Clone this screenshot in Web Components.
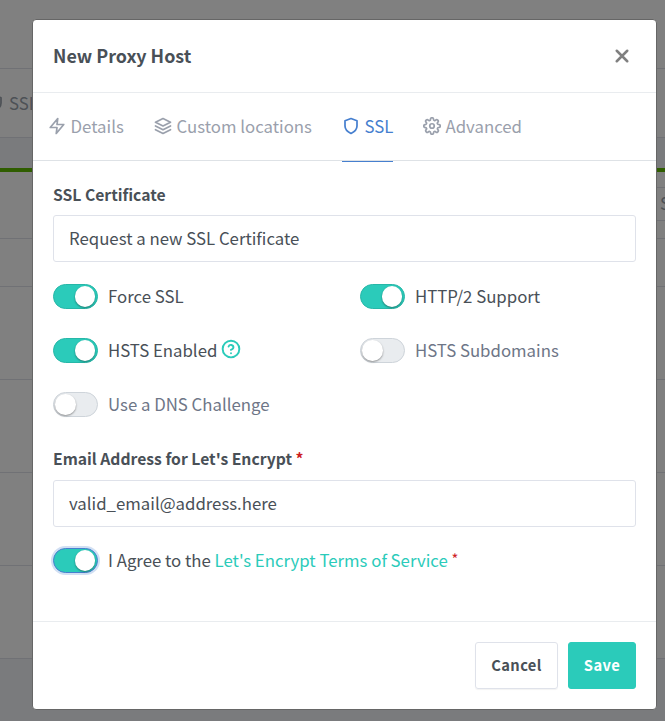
<!DOCTYPE html>
<html lang="en">
<head>
<meta charset="utf-8">
<title>New Proxy Host</title>
<style>
html,body{margin:0;height:100%;overflow:hidden}
body{background:#7a7b7d;font-family:"Noto Sans CJK SC","Noto Sans",sans-serif;font-size:16.8px;line-height:24px;color:#495057}
</style>
</head>
<body>
<proxy-page></proxy-page>
<modal-dialog>
  <modal-header slot="header">New Proxy Host</modal-header>
  <tab-bar slot="tabs">
    <tab-item icon="zap" style="width:76px;margin-right:30px">Details</tab-item>
    <tab-item icon="layers" style="width:158px;margin-right:30px">Custom locations</tab-item>
    <tab-item icon="shield" active style="width:51px;margin-right:30px">SSL</tab-item>
    <tab-item icon="settings" style="width:100px">Advanced</tab-item>
  </tab-bar>
  <form-field label="SSL Certificate">Request a new SSL Certificate</form-field>
  <switch-grid>
    <toggle-switch on>Force SSL</toggle-switch>
    <toggle-switch on>HTTP/2 Support</toggle-switch>
    <toggle-switch on>HSTS Enabled <ui-icon name="help"></ui-icon></toggle-switch>
    <toggle-switch>HSTS Subdomains</toggle-switch>
    <toggle-switch>Use a DNS Challenge</toggle-switch>
  </switch-grid>
  <form-field label="Email Address for Let's Encrypt" required>valid_email@address.here</form-field>
  <toggle-switch class="agree" on focused>I Agree to the <terms-link>Let's Encrypt Terms of Service</terms-link> <required-mark small></required-mark></toggle-switch>
  <action-button slot="footer">Cancel</action-button>
  <action-button slot="footer" primary>Save</action-button>
</modal-dialog>
<script>
const icons = {
  zap:'<path d="M13 2 3 14h9l-1 8 10-12h-9l1-8z"/>',
  layers:'<path d="M12 2 2 7l10 5 10-5-10-5z"/><path d="m2 17 10 5 10-5M2 12l10 5 10-5"/>',
  shield:'<path d="M12 22s8-4 8-10V5l-8-3-8 3v7c0 6 8 10 8 10z"/>',
  settings:'<circle cx="12" cy="12" r="3"/><path d="M19.4 15a1.65 1.65 0 0 0 .33 1.82l.06.06a2 2 0 0 1-2.83 2.83l-.06-.06a1.65 1.65 0 0 0-2.8 1.17V21a2 2 0 0 1-4 0v-.09A1.65 1.65 0 0 0 9 19.4a1.65 1.65 0 0 0-1.82.33l-.06.06a2 2 0 0 1-2.83-2.83l.06-.06a1.65 1.65 0 0 0-1.17-2.8H3a2 2 0 0 1 0-4h.09A1.65 1.65 0 0 0 4.6 9a1.65 1.65 0 0 0-.33-1.82l-.06-.06a2 2 0 0 1 2.83-2.83l.06.06A1.65 1.65 0 0 0 9 4.68 1.65 1.65 0 0 0 10 3.17V3a2 2 0 0 1 4 0v.09a1.65 1.65 0 0 0 2.8 1.17l.06-.06a2 2 0 0 1 2.83 2.83l-.06.06A1.65 1.65 0 0 0 19.32 9 1.65 1.65 0 0 0 20.83 10H21a2 2 0 0 1 0 4h-.09a1.65 1.65 0 0 0-1.51 1z"/>',
  help:'<circle cx="12" cy="12" r="10"/><path d="M9.1 9a3 3 0 0 1 5.8 1c0 2-3 3-3 3M12 17h.01"/>',
  close:'<path d="M5 5 19 19M19 5 5 19"/>'
};
function define(name, render){
  customElements.define(name, class extends HTMLElement{
    constructor(){ super(); this.attachShadow({mode:'open'}); }
    connectedCallback(){ this.shadowRoot.innerHTML = render(this); }
  });
}
define('ui-icon', el => `<style>
  :host{display:inline-block;width:18px;height:18px;flex:none}
  :host([name=help]){width:20px;height:20px;color:#2bcbba;vertical-align:-2px}
  svg{display:block;width:100%;height:100%;fill:none;stroke:currentColor;stroke-width:var(--stroke,2.3);stroke-linecap:round;stroke-linejoin:round}
  </style><svg viewBox="0 0 24 24">${icons[el.getAttribute('name')]}</svg>`);
define('proxy-page', () => `<style>
  :host{position:absolute;inset:0;display:flex;flex-direction:column;overflow:hidden;background:#7a7b7d;color:#4d5156}
  div{box-sizing:border-box;flex:none;background:#808080;border-bottom:1px solid #707175}
  .top{height:69px}
  .nav{height:69px;display:flex;align-items:center;padding-bottom:1px;gap:5px}
  .nav ui-icon{margin-left:-14px}
  .gap{height:30px;background:#7a7b7d;border:0}
  .accent{height:4px;background:#2f5d00;border:0}
  .title{height:67px;display:flex;justify-content:flex-end;padding-top:15px}
  .search{width:10px;height:34px;border-top:1px solid #707175;padding:3px 0 0 5px;overflow:hidden}
  .head{height:48px}
  .row{height:93px}
  </style>
  <div class="top"></div>
  <div class="nav"><ui-icon name="shield"></ui-icon><span>SSL</span></div>
  <div class="gap"></div><div class="accent"></div>
  <div class="title"><div class="search">S</div></div>
  <div class="head"></div><div class="row"></div><div class="row"></div><div class="row"></div><div class="row"></div>`);
define('modal-dialog', () => `<style>
  :host{position:absolute;left:32px;top:19px;width:625px;height:691px;box-sizing:border-box;display:flex;flex-direction:column;background:#fff;border:1px solid #666;border-radius:4px}
  main{flex:1;padding:22px 20px 0;display:flex;flex-direction:column}
  footer{height:88px;box-sizing:border-box;border-top:1px solid #e9ecef;padding:20px;display:flex;justify-content:flex-end;gap:10px}
  ::slotted(switch-grid){margin:22px 0 30px}
  ::slotted(.agree){margin-top:21px}
  </style>
  <slot name="header"></slot><slot name="tabs"></slot><main><slot></slot></main><footer><slot name="footer"></slot></footer>`);
define('modal-header', () => `<style>
  :host{height:73px;flex:none;box-sizing:border-box;border-bottom:1px solid #e9ecef;display:flex;align-items:center;justify-content:space-between;padding:0 25px 0 20px;font-weight:700;font-size:17.9px}
  span{padding-bottom:2px}
  ui-icon{color:#808080;--stroke:3.4;width:18px;height:18px}
  </style><span><slot></slot></span><ui-icon name="close"></ui-icon>`);
define('tab-bar', () => `<style>
  :host{display:flex;height:68px;flex:none;box-sizing:border-box;border-bottom:1px solid #dee2e6;padding-left:15px}
  </style><slot></slot>`);
define('tab-item', el => `<style>
  :host{display:flex;align-items:center;gap:4.5px;height:69px;box-sizing:border-box;color:#9aa0ac;white-space:nowrap;padding-bottom:2px;border-bottom:1px solid transparent;font-size:16.8px}
  :host([active]){color:#467fcf;border-color:#467fcf}
  </style><ui-icon name="${el.getAttribute('icon')}"></ui-icon><span><slot></slot></span>`);
define('required-mark', () => `<style>:host{color:#cd201f}:host([small]){font-size:14.7px;vertical-align:2px;line-height:1}</style>*`);
define('form-field', el => `<style>
  :host{display:block}
  label{display:block;height:24px;font-weight:700;font-size:15.7px;margin-bottom:8px}
  :host([required]) label{margin-bottom:9px}
  div{height:47px;box-sizing:border-box;border:1px solid #dfe2ea;border-radius:3px;padding:0 15px 1px;display:flex;align-items:center}
  </style><label><span>${el.getAttribute('label')}</span>${el.hasAttribute('required')?' <required-mark></required-mark>':''}</label><div><slot></slot></div>`);
define('switch-grid', () => `<style>
  :host{display:grid;grid-template-columns:307px 1fr;row-gap:29px}
  </style><slot></slot>`);
define('toggle-switch', () => `<style>
  :host{display:flex;align-items:center;height:25px;color:#6e7687;white-space:nowrap}
  :host([on]){color:#495057}
  i{width:45px;height:25px;box-sizing:border-box;border:1px solid #ced4da;border-radius:13px;background:#e9ecef;flex:none;margin-right:10px;display:flex;padding:1px}
  b{width:20.5px;height:20.5px;border-radius:50%;background:#fff;box-shadow:0 1px 2px rgba(0,0,0,.4)}
  span{padding-bottom:1px}
  :host([on]) i{background:#2bcbba;border-color:#27b7a8;justify-content:flex-end;padding-right:2px}
  :host([focused]) i{border-color:#467fcf;box-shadow:0 0 0 2px rgba(70,127,207,.25)}
  </style><i><b></b></i><span><slot></slot></span>`);
define('terms-link', () => `<style>:host{color:#2bcbba}</style><slot></slot>`);
define('action-button', () => `<style>
  :host{display:flex;align-items:center;justify-content:center;width:83px;height:47px;box-sizing:border-box;border:1px solid #dfe2ea;border-radius:3px;font-weight:700;font-size:14.7px;letter-spacing:.4px;padding-bottom:1px;box-shadow:0 1px 1px rgba(0,0,0,.05)}
  :host([primary]){width:68px;background:#2bcbba;border-color:#2bcbba;color:#fff;box-shadow:none}
  </style><span><slot></slot></span>`);
</script>
</body>
</html>
